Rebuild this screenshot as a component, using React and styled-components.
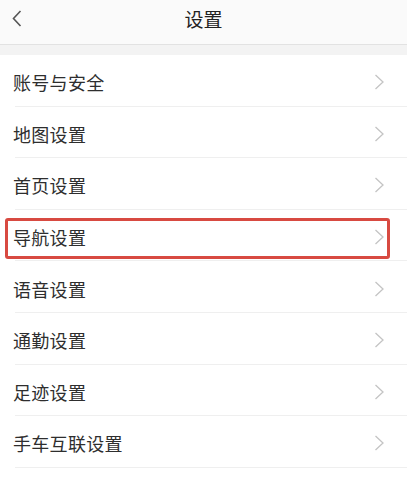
import React from "react";
import styled, { createGlobalStyle } from "styled-components";

const GlobalStyle = createGlobalStyle`
  html, body {
    margin: 0;
    padding: 0;
    background: #f3f3f3;
    overflow: hidden;
  }
  body {
    font-family: "Noto Sans CJK SC", "Noto Sans", sans-serif;
  }
`;

const Page = styled.div`
  width: 407px;
  height: 487px;
  overflow: hidden;
  background: #f3f3f3;
`;

const Header = styled.div`
  height: 44px;
  display: flex;
  align-items: center;
  justify-content: center;
  position: relative;
  background: #fafafa;
  border-bottom: 1px solid #e2e2e2;
`;

const BackButton = styled.div`
  position: absolute;
  left: 8px;
  top: 9px;
  width: 18px;
  height: 18px;
  display: flex;
  align-items: center;
  justify-content: center;
`;

const Title = styled.h1`
  margin: 0;
  font-size: 19px;
  font-weight: 400;
  color: #222;
  transform: translateY(-4px);
`;

const List = styled.div`
  margin-top: 10px;
  background: #fff;
`;

const Row = styled.div`
  position: relative;
  height: 51.6px;
  box-sizing: border-box;
  display: flex;
  align-items: center;
  justify-content: space-between;
  padding: 3px 22px 0 13px;

  &::after {
    content: "";
    position: absolute;
    left: 15px;
    right: 0;
    bottom: 0;
    height: 1px;
    background: #efefef;
  }
`;

const Label = styled.span`
  font-size: 18px;
  color: #2e2e2e;
  letter-spacing: 0.3px;
`;

const Highlight = styled.div`
  position: absolute;
  left: 5px;
  right: 17px;
  top: 8px;
  height: 41px;
  box-sizing: border-box;
  border: 3px solid #d84a41;
  border-radius: 3px;
  pointer-events: none;
`;

const items = [
  "账号与安全",
  "地图设置",
  "首页设置",
  "导航设置",
  "语音设置",
  "通勤设置",
  "足迹设置",
  "手车互联设置",
  "常用车辆设置",
];

function Chevron() {
  return (
    <svg width="11" height="16" viewBox="0 0 11 16">
      <path d="M1.5 1 L9 8 L1.5 15" fill="none" stroke="#c4c4c4" strokeWidth="1.3" />
    </svg>
  );
}

export default function App() {
  return (
    <Page>
      <GlobalStyle />
      <Header>
        <BackButton>
          <svg width="10" height="17" viewBox="0 0 10 17">
            <path d="M8.5 1 L1.5 8.5 L8.5 16" fill="none" stroke="#555" strokeWidth="1.6" />
          </svg>
        </BackButton>
        <Title>设置</Title>
      </Header>
      <List>
        {items.map((item, i) => (
          <Row key={item}>
            <Label>{item}</Label>
            <Chevron />
            {i === 3 && <Highlight />}
          </Row>
        ))}
      </List>
    </Page>
  );
}
